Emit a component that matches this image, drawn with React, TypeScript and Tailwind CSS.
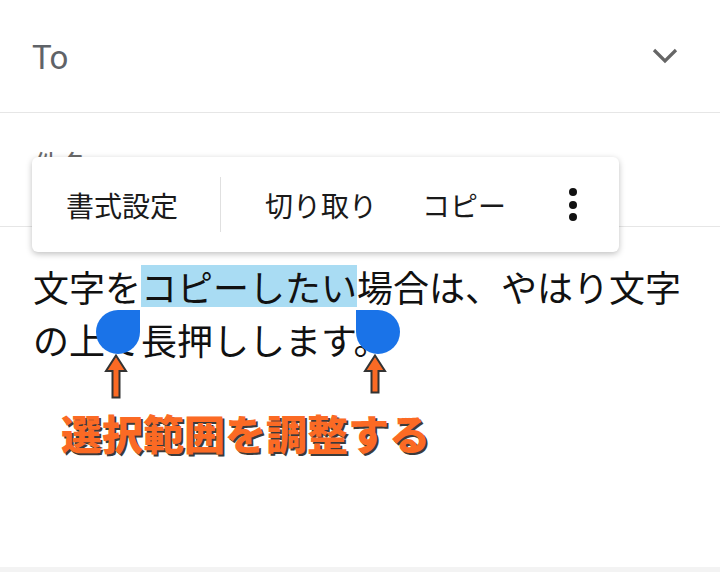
import React from "react";

const jp = "font-['Noto_Sans_CJK_JP','Noto_Sans',sans-serif]";

export default function App() {
  return (
    <div className={`relative w-[720px] h-[572px] bg-white overflow-hidden flex flex-col ${jp}`}>
      {/* To row */}
      <div className="h-[113px] shrink-0 border-b border-[#e6e6e6] flex items-center justify-between pl-[32px] pr-[42px]">
        <span className="font-['Roboto',sans-serif] text-[33px] text-[#5f6368] leading-none mt-[3px] tracking-[-0.5px]">To</span>
        <svg width="26" height="16" viewBox="0 0 26 16">
          <path d="M2 2 L13 13 L24 2" fill="none" stroke="#666" strokeWidth="3.2" />
        </svg>
      </div>
      {/* Subject row */}
      <div className="h-[114px] shrink-0 border-b border-[#e6e6e6] pl-[33px] pt-[37px]">
        <span className="text-[28px] text-[#6b6b6b] leading-none">件名</span>
      </div>
      {/* Body */}
      <div className="flex-1 pl-[33px] pt-[33px]">
        <p className="text-[36px] leading-[53px] text-[#111] tracking-normal">
          文字を
          <span className="inline-block h-[42px] leading-[42px] bg-[#a9dcf3]">コピーしたい</span>
          場合は、やはり文字
          <br />
          の上で長押しします。
        </p>
        <p className="mt-[46px] ml-[28px] text-[41px] leading-none font-black text-[#fb6a24] [text-shadow:2px_2px_0_#3b3b3b]">
          選択範囲を調整する
        </p>
      </div>
      <div className="h-[5px] shrink-0 bg-[#f3f3f3]" />

      {/* Floating toolbar */}
      <div className="absolute left-[32px] top-[157px] w-[587px] h-[95px] bg-white rounded-[6px] shadow-[0_2px_6px_rgba(0,0,0,0.25)] flex items-center pl-[34px] text-[28px] text-[#1a1a1a]">
        <span className="leading-none">書式設定</span>
        <div className="ml-[42px] w-px h-[55px] bg-[#e0e0e0]" />
        <span className="ml-[44px] leading-none">切り取り</span>
        <span className="ml-[45px] leading-none">コピー</span>
        <div className="ml-[63px] flex flex-col gap-[4.5px]">
          <span className="block w-[8px] h-[8px] rounded-full bg-[#111]" />
          <span className="block w-[8px] h-[8px] rounded-full bg-[#111]" />
          <span className="block w-[8px] h-[8px] rounded-full bg-[#111]" />
        </div>
      </div>

      {/* Selection handles */}
      <div className="absolute left-[96px] top-[310px] w-[44px] h-[44px] bg-[#1a73e8] rounded-full rounded-tr-none" />
      <div className="absolute left-[356px] top-[310px] w-[44px] h-[44px] bg-[#1a73e8] rounded-full rounded-tl-none" />

      {/* Arrows */}
      <svg className="absolute left-[104px] top-[354px]" width="24" height="46" viewBox="0 0 24 46">
        <path d="M12 1.5 L22 17 L15.5 17 L15.5 43.5 L8.5 43.5 L8.5 17 L2 17 Z" fill="#fb6a24" stroke="#333" strokeWidth="2" strokeLinejoin="miter" />
      </svg>
      <svg className="absolute left-[363px] top-[354px]" width="24" height="41" viewBox="0 0 24 41">
        <path d="M12 1.5 L22 17 L15.5 17 L15.5 38.5 L8.5 38.5 L8.5 17 L2 17 Z" fill="#fb6a24" stroke="#333" strokeWidth="2" strokeLinejoin="miter" />
      </svg>
    </div>
  );
}
